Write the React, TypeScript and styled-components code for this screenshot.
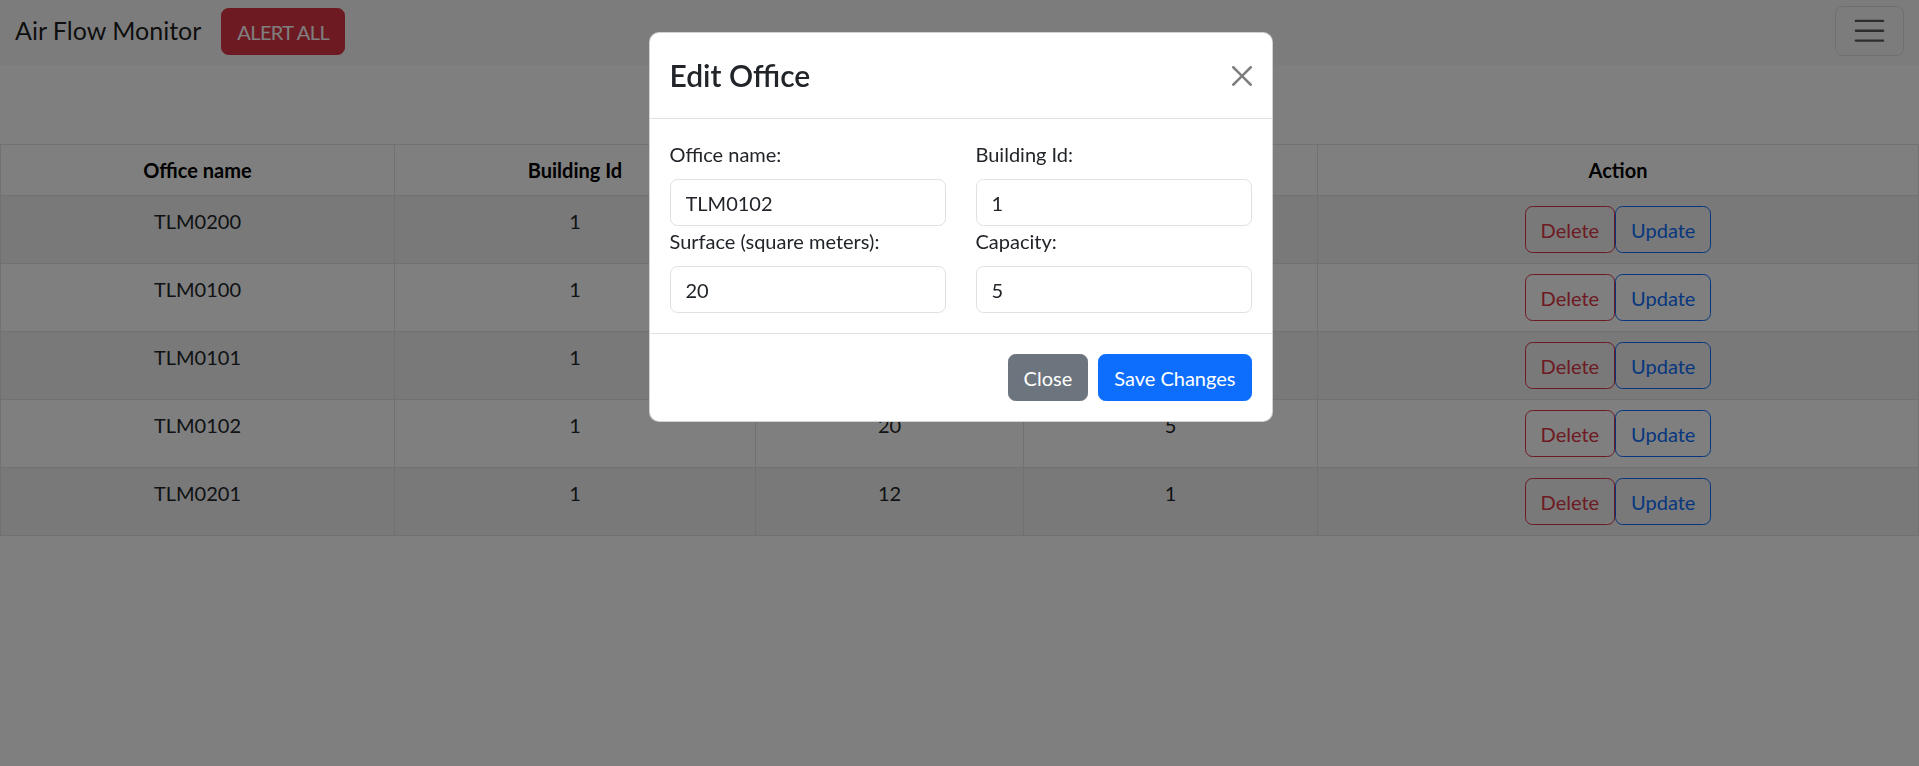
import React from "react";
import styled, { createGlobalStyle } from "styled-components";

const GlobalStyle = createGlobalStyle`
  html, body {
    margin: 0;
    padding: 0;
    background: #ffffff;
    overflow: hidden;
  }
  body {
    font-family: Lato, "Noto Sans", "Liberation Sans", sans-serif;
    font-size: 20px;
    line-height: 30px;
    color: #212529;
  }
  * { box-sizing: border-box; }
`;

const Page = styled.div`
  min-height: 766px;
  display: flex;
  flex-direction: column;
`;

const Navbar = styled.nav`
  height: 65px;
  padding: 6px 15px 0 15px;
  background: #f8f9fa;
  display: flex;
  align-items: flex-start;
`;

const Brand = styled.a`
  font-size: 25px;
  line-height: 37.5px;
  margin-top: 6px;
  margin-right: 20px;
  color: rgba(0, 0, 0, 0.9);
  text-decoration: none;
  white-space: nowrap;
`;

const SolidButton = styled.button<{ $bg: string }>`
  font-family: inherit;
  font-size: 20px;
  line-height: 30px;
  height: 47px;
  padding: 7.5px 15px;
  border: 1px solid ${(p) => p.$bg};
  background: ${(p) => p.$bg};
  color: #ffffff;
  border-radius: 7.5px;
  cursor: pointer;
  white-space: nowrap;
`;

const AlertButton = styled(SolidButton)`
  margin-top: 2px;
  letter-spacing: -0.6px;
`;

const Spacer = styled.div`
  flex: 1;
`;

const Toggler = styled.button`
  width: 69px;
  height: 50px;
  padding: 5px 15px;
  border: 1px solid rgba(0, 0, 0, 0.1);
  background: transparent;
  border-radius: 7.5px;
  display: flex;
  align-items: center;
  justify-content: center;
`;

const Table = styled.table`
  margin-top: 79px;
  width: 100%;
  border-collapse: collapse;
  table-layout: fixed;
  text-align: center;
  vertical-align: top;
`;

const HeadCell = styled.th`
  font-weight: 700;
  color: #000;
  padding: 10px;
  line-height: 30px;
  border: 1px solid #dee2e6;
  background: #ffffff;
`;

const Row = styled.tr<{ $striped: boolean }>`
  background: ${(p) => (p.$striped ? "#f2f2f2" : "#ffffff")};
`;

const Cell = styled.td`
  padding: 10px;
  line-height: 30px;
  border: 1px solid #dee2e6;
  vertical-align: top;
  color: #212529;
`;

const Actions = styled.div`
  display: flex;
  justify-content: center;
`;

const OutlineButton = styled.button<{ $color: string }>`
  font-family: inherit;
  font-size: 20px;
  line-height: 30px;
  height: 47px;
  padding: 7.5px 15px;
  border: 1px solid ${(p) => p.$color};
  color: ${(p) => p.$color};
  background: transparent;
  border-radius: 7.5px;
  white-space: nowrap;
`;

const Backdrop = styled.div`
  position: fixed;
  inset: 0;
  background: rgba(0, 0, 0, 0.5);
  display: flex;
  flex-direction: column;
  align-items: center;
`;

const Dialog = styled.div`
  margin-top: 32px;
  margin-left: 2px;
  width: 624px;
  background: #ffffff;
  border: 1px solid rgba(0, 0, 0, 0.175);
  border-radius: 10px;
  display: flex;
  flex-direction: column;
`;

const DialogHeader = styled.div`
  display: flex;
  align-items: center;
  padding: 20px;
  border-bottom: 1px solid #dee2e6;
`;

const DialogTitle = styled.div`
  font-size: 30px;
  line-height: 45px;
  font-weight: 600;
  color: #212529;
  flex: 1;
`;

const CloseX = styled.button`
  width: 20px;
  height: 20px;
  padding: 0;
  border: 0;
  background: transparent;
  opacity: 0.5;
  display: flex;
`;

const DialogBody = styled.div`
  padding: 20px;
  display: grid;
  grid-template-columns: 1fr 1fr;
  column-gap: 30px;
`;

const Field = styled.div`
  display: flex;
  flex-direction: column;
`;

const Label = styled.label`
  line-height: 30px;
  margin-bottom: 10px;
  color: #212529;
`;

const Input = styled.input`
  font-family: inherit;
  font-size: 20px;
  line-height: 30px;
  height: 47px;
  padding: 7.5px 15px;
  border: 1px solid #dee2e6;
  border-radius: 7.5px;
  color: #212529;
  background: #ffffff;
  width: 100%;
`;

const DialogFooter = styled.div`
  display: flex;
  justify-content: flex-end;
  padding: 15px;
  border-top: 1px solid #dee2e6;
  gap: 10px;
`;

const FooterButton = styled(SolidButton)`
  margin: 5px;
  &:first-child { margin-right: 0; }
  &:last-child { margin-left: 0; }
`;

const offices = [
  { name: "TLM0200", building: 1, surface: 15, capacity: 3 },
  { name: "TLM0100", building: 1, surface: 25, capacity: 6 },
  { name: "TLM0101", building: 1, surface: 18, capacity: 4 },
  { name: "TLM0102", building: 1, surface: 20, capacity: 5 },
  { name: "TLM0201", building: 1, surface: 12, capacity: 1 },
];

const colWidths = [394, 361, 268, 294];

export default function App() {
  return (
    <Page>
      <GlobalStyle />
      <Navbar>
        <Brand href="#">Air Flow Monitor</Brand>
        <AlertButton $bg="#dc3545">ALERT ALL</AlertButton>
        <Spacer />
        <Toggler aria-label="Toggle navigation">
          <svg width="37.5" height="37.5" viewBox="0 0 30 30">
            <path
              d="M4 7h22M4 15h22M4 23h22"
              stroke="rgba(33,37,41,0.75)"
              strokeWidth="2"
              strokeLinecap="round"
              fill="none"
            />
          </svg>
        </Toggler>
      </Navbar>

      <Table>
        <colgroup>
          {colWidths.map((w, i) => (
            <col key={i} style={{ width: w }} />
          ))}
          <col />
        </colgroup>
        <thead>
          <tr>
            <HeadCell>Office name</HeadCell>
            <HeadCell>Building Id</HeadCell>
            <HeadCell>Surface</HeadCell>
            <HeadCell>Capacity</HeadCell>
            <HeadCell>Action</HeadCell>
          </tr>
        </thead>
        <tbody>
          {offices.map((o, i) => (
            <Row key={o.name} $striped={i % 2 === 0}>
              <Cell>{o.name}</Cell>
              <Cell>{o.building}</Cell>
              <Cell>{o.surface}</Cell>
              <Cell>{o.capacity}</Cell>
              <Cell>
                <Actions>
                  <OutlineButton $color="#dc3545">Delete</OutlineButton>
                  <OutlineButton $color="#0d6efd">Update</OutlineButton>
                </Actions>
              </Cell>
            </Row>
          ))}
        </tbody>
      </Table>

      <Backdrop>
        <Dialog role="dialog">
          <DialogHeader>
            <DialogTitle>Edit Office</DialogTitle>
            <CloseX aria-label="Close">
              <svg width="20" height="20" viewBox="0 0 16 16">
                <path
                  fill="#000"
                  d="M.293.293a1 1 0 0 1 1.414 0L8 6.586 14.293.293a1 1 0 1 1 1.414 1.414L9.414 8l6.293 6.293a1 1 0 0 1-1.414 1.414L8 9.414l-6.293 6.293a1 1 0 0 1-1.414-1.414L6.586 8 .293 1.707a1 1 0 0 1 0-1.414"
                />
              </svg>
            </CloseX>
          </DialogHeader>
          <DialogBody>
            <Field>
              <Label>Office name:</Label>
              <Input defaultValue="TLM0102" />
            </Field>
            <Field>
              <Label>Building Id:</Label>
              <Input defaultValue="1" />
            </Field>
            <Field>
              <Label>Surface (square meters):</Label>
              <Input defaultValue="20" />
            </Field>
            <Field>
              <Label>Capacity:</Label>
              <Input defaultValue="5" />
            </Field>
          </DialogBody>
          <DialogFooter>
            <FooterButton $bg="#6c757d">Close</FooterButton>
            <FooterButton $bg="#0d6efd">Save Changes</FooterButton>
          </DialogFooter>
        </Dialog>
      </Backdrop>
    </Page>
  );
}
